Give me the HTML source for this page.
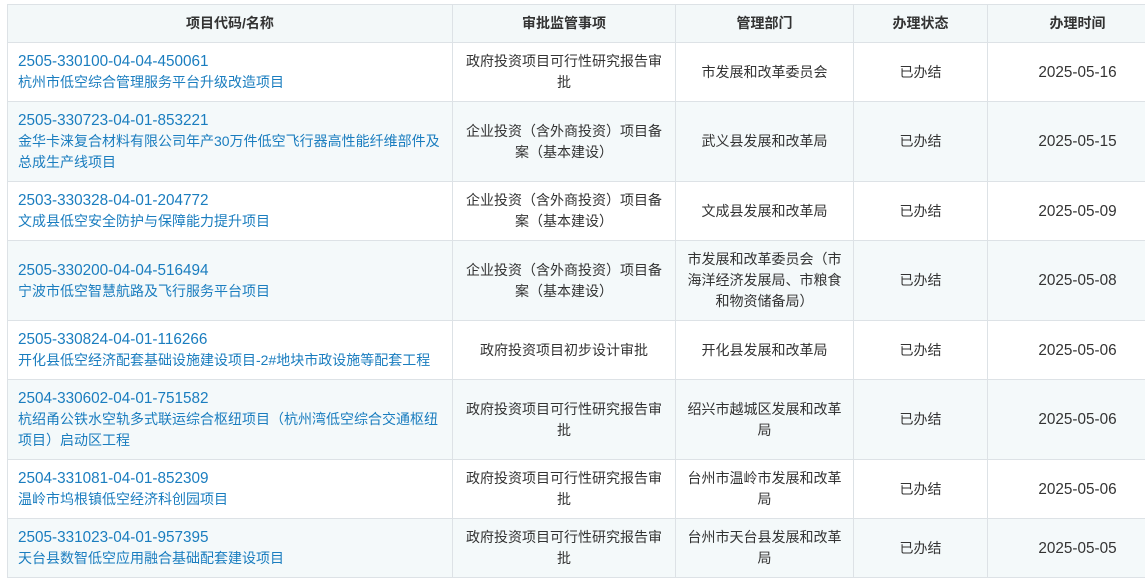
<!DOCTYPE html>
<html><head><meta charset="utf-8"><style>
body{margin:0;background:#fff;width:1145px;height:570px;overflow:hidden;font-family:"Liberation Sans","Noto Sans CJK SC",sans-serif;font-size:14px;color:#333}
table{position:absolute;left:7px;top:4px;border-collapse:collapse;table-layout:fixed;width:1160px}
td,th{border:1px solid #dde2e6;line-height:21px;padding:8px 10px;text-align:center;vertical-align:middle}
th{background:#f3f8f9;height:20px;padding:8px 10px;font-weight:bold;color:#333}
td:first-child{text-align:left;color:#1a7dbf}
tr:nth-child(odd) td{background:#f4f9fa}
td:nth-child(2){padding:8px 12px}
.n{font-size:15.3px}
</style></head><body>
<table>
<colgroup><col style="width:445px"><col style="width:223px"><col style="width:178px"><col style="width:134px"><col style="width:180px"></colgroup>
<tr><th>项目代码/名称</th><th>审批监管事项</th><th>管理部门</th><th>办理状态</th><th>办理时间</th></tr>
<tr><td><span class="n">2505-330100-04-04-450061</span><br>杭州市低空综合管理服务平台升级改造项目</td><td>政府投资项目可行性研究报告审批</td><td>市发展和改革委员会</td><td>已办结</td><td><span class="n">2025-05-16</span></td></tr>
<tr><td><span class="n">2505-330723-04-01-853221</span><br>金华卡涞复合材料有限公司年产30万件低空飞行器高性能纤维部件及总成生产线项目</td><td>企业投资（含外商投资）项目备案（基本建设）</td><td>武义县发展和改革局</td><td>已办结</td><td><span class="n">2025-05-15</span></td></tr>
<tr><td><span class="n">2503-330328-04-01-204772</span><br>文成县低空安全防护与保障能力提升项目</td><td>企业投资（含外商投资）项目备案（基本建设）</td><td>文成县发展和改革局</td><td>已办结</td><td><span class="n">2025-05-09</span></td></tr>
<tr><td><span class="n">2505-330200-04-04-516494</span><br>宁波市低空智慧航路及飞行服务平台项目</td><td>企业投资（含外商投资）项目备案（基本建设）</td><td>市发展和改革委员会（市海洋经济发展局、市粮食和物资储备局）</td><td>已办结</td><td><span class="n">2025-05-08</span></td></tr>
<tr><td><span class="n">2505-330824-04-01-116266</span><br>开化县低空经济配套基础设施建设项目-2#地块市政设施等配套工程</td><td>政府投资项目初步设计审批</td><td>开化县发展和改革局</td><td>已办结</td><td><span class="n">2025-05-06</span></td></tr>
<tr><td><span class="n">2504-330602-04-01-751582</span><br>杭绍甬公铁水空轨多式联运综合枢纽项目（杭州湾低空综合交通枢纽项目）启动区工程</td><td>政府投资项目可行性研究报告审批</td><td>绍兴市越城区发展和改革局</td><td>已办结</td><td><span class="n">2025-05-06</span></td></tr>
<tr><td><span class="n">2504-331081-04-01-852309</span><br>温岭市坞根镇低空经济科创园项目</td><td>政府投资项目可行性研究报告审批</td><td>台州市温岭市发展和改革局</td><td>已办结</td><td><span class="n">2025-05-06</span></td></tr>
<tr><td><span class="n">2505-331023-04-01-957395</span><br>天台县数智低空应用融合基础配套建设项目</td><td>政府投资项目可行性研究报告审批</td><td>台州市天台县发展和改革局</td><td>已办结</td><td><span class="n">2025-05-05</span></td></tr>
</table>
</body></html>
